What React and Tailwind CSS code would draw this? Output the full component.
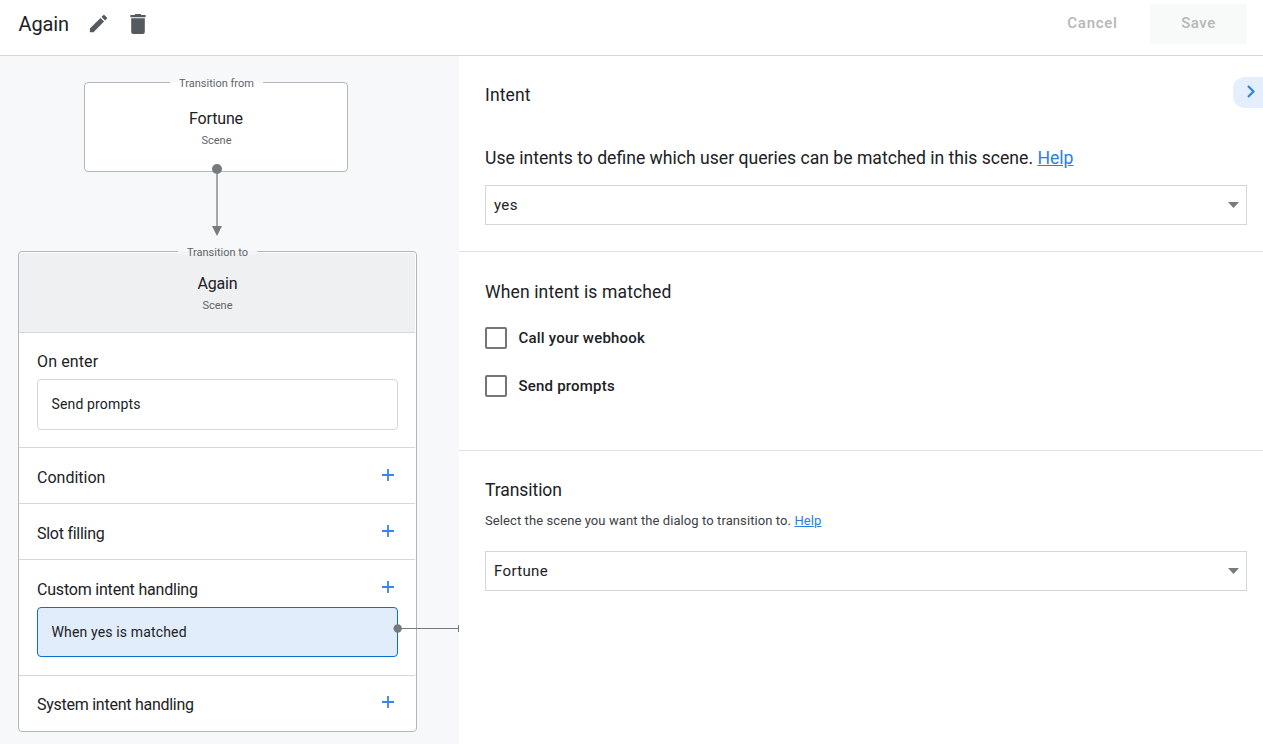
import React from "react";

const display = "font-['Roboto',sans-serif] text-[#202124] whitespace-nowrap";

function Plus() {
  return (
    <svg className="h-3 w-3" viewBox="0 0 12 12" aria-hidden="true">
      <path d="M6 0V12M0 6H12" stroke="#3c82ea" strokeWidth="1.8" fill="none" />
    </svg>
  );
}

function Heading({ children, tracking, add = true }) {
  return (
    <div className="flex h-6 items-center justify-between">
      <span className={`${display} pt-px text-[16px] leading-6 ${tracking}`}>{children}</span>
      {add && (
        <span className="-mt-1 mr-1 flex h-3">
          <Plus />
        </span>
      )}
    </div>
  );
}

function Select({ value }) {
  return (
    <div className="flex h-10 w-[762px] items-center justify-between border border-[#d5d6d9] bg-white pr-[7px] pl-2">
      <span className="text-[15px] leading-6 tracking-[0.35px] text-[#202124]">{value}</span>
      <svg className="h-[6px] w-[11px]" viewBox="0 0 11 6" aria-hidden="true">
        <path d="M0 0H11L5.5 6Z" fill="#757c7f" />
      </svg>
    </div>
  );
}

function Checkbox({ label, tracking }) {
  return (
    <div className="flex h-[22px] items-center gap-[11.5px]">
      <span className="h-[22px] w-[22px] rounded-[2px] border-2 border-[#757575] bg-white" />
      <span className={`text-[15px] leading-[22px] font-medium text-[#202124] ${tracking}`}>{label}</span>
    </div>
  );
}

function Header() {
  return (
    <header className="flex h-14 shrink-0 items-start justify-between border-b border-[#d5d7da] bg-white pr-4 pl-[18px]">
      <div className="flex h-[47px] items-center">
        <h1 className={`${display} w-[51px] pl-[0.5px] text-[20px] leading-6 tracking-[-0.1px]`}>Again</h1>
        <svg className="ml-[17.5px] h-[23px] w-[23px]" viewBox="0 0 24 24" fill="#555a5e" aria-hidden="true">
          <path d="M3 17.25V21h3.75L17.81 9.94l-3.75-3.75L3 17.25zM20.71 7.04a1 1 0 0 0 0-1.41l-2.34-2.34a1 1 0 0 0-1.41 0l-1.83 1.83 3.75 3.75 1.83-1.83z" />
        </svg>
        <svg className="ml-[20px] h-5 w-4" viewBox="0 0 16 20" fill="#555a5e" aria-hidden="true">
          <path d="M5 0h6v1h4.6v2.2H.4V1H5zM1.2 4.2h13.6V18a2 2 0 0 1-2 2H3.2a2 2 0 0 1-2-2z" />
        </svg>
      </div>
      <div className="flex items-center pt-1">
        <button className="h-10 w-[83px] pb-px text-[15px] font-medium tracking-[0.75px] text-[#b5b7b8]">Cancel</button>
        <button className="ml-4 h-10 w-[97px] rounded-[3px] bg-[#f8faf9] pb-px text-[15px] font-medium tracking-[0.5px] text-[#b5b7b8]">
          Save
        </button>
      </div>
    </header>
  );
}

function Diagram() {
  return (
    <aside className="relative flex w-[459px] shrink-0 flex-col bg-[#f7f8fa] pt-[26px] pl-[18px]">
      <section className="relative ml-[66px] flex h-[90px] w-[264px] shrink-0 flex-col items-center rounded-[4px] border border-[#b1b7bc] bg-white pt-[25px]">
        <span className="absolute -top-[1px] left-[85px] flex h-1 w-[93px] items-center justify-center bg-white text-[11px] whitespace-nowrap text-[#5f6368]">
          Transition from
        </span>
        <span className={`${display} pt-px text-[16px] leading-5 tracking-[-0.15px]`}>Fortune</span>
        <span className="mt-1 pl-px text-[11px] leading-4 text-[#5f6368]">Scene</span>
      </section>

      <section className="relative mt-[79px] flex h-[481px] w-[399px] shrink-0 flex-col rounded-[4px] border border-[#b1b7bc] bg-white pt-px pr-px">
        <div className="flex h-20 shrink-0 flex-col items-center rounded-t-[3px] border-b border-[#d5d7da] bg-[#eff0f2] pt-5 pl-px">
          <span className={`${display} pt-px text-[16px] leading-5 tracking-[-0.2px]`}>Again</span>
          <span className="mt-1 text-[11px] leading-4 text-[#5f6368]">Scene</span>
        </div>
        <span className="absolute -top-[1px] left-[159px] flex h-1 w-[79px] items-center justify-center bg-[#f3f4f6] text-[11px] whitespace-nowrap text-[#5f6368]">
          Transition to
        </span>
        <div className="h-[115px] shrink-0 border-b border-[#d5d7da] pt-4 pr-[17px] pl-[18px]">
          <Heading add={false} tracking="tracking-[0.12px]">On enter</Heading>
          <div className="mt-[6px] flex h-[51px] items-center rounded-[4px] border border-[#d5d7da] pl-[13.5px] text-[14px] tracking-[0.15px] text-[#202124]">
            Send prompts
          </div>
        </div>
        <div className="h-14 shrink-0 border-b border-[#d5d7da] pt-[17px] pr-[17px] pl-[18px]">
          <Heading tracking="tracking-normal">Condition</Heading>
        </div>
        <div className="h-14 shrink-0 border-b border-[#d5d7da] pt-[17px] pr-[17px] pl-[18px]">
          <Heading tracking="tracking-[-0.26px]">Slot filling</Heading>
        </div>
        <div className="h-[116px] shrink-0 border-b border-[#d5d7da] pt-[17px] pr-[17px] pl-[18px]">
          <Heading tracking="tracking-[-0.2px]">Custom intent handling</Heading>
          <div className="mt-[6px] flex h-[50px] items-center rounded-[4px] border border-[#0b6fd0] bg-[#e1edfb] pl-[13.5px] text-[14px] tracking-[0.15px] text-[#202124]">
            When yes is matched
          </div>
        </div>
        <div className="pt-4 pr-[17px] pl-[18px]">
          <Heading tracking="tracking-[-0.26px]">System intent handling</Heading>
        </div>
      </section>

      <svg className="absolute top-[108px] left-[211px] h-[74px] w-3" viewBox="0 0 12 74" fill="#737b80" aria-hidden="true">
        <path d="M6 5V64" stroke="#9a9fa2" strokeWidth="1.8" />
        <circle cx="6" cy="5" r="5" />
        <path d="M1 62H11L6 72Z" />
      </svg>
      <svg className="absolute top-[568px] left-[393px] h-[9px] w-[66px]" viewBox="0 0 66 9" fill="#737b7c" aria-hidden="true">
        <circle cx="4.7" cy="4.5" r="4.2" />
        <path d="M4 4H66V5H4zM65 1H66V8H65z" />
      </svg>
    </aside>
  );
}

function Details() {
  return (
    <main className="relative flex min-w-0 flex-1 flex-col bg-white">
      <section className="h-[196px] shrink-0 border-b border-[#dfe0e2] pt-[27px] pl-[26px]">
        <h2 className={`${display} text-[17.5px] leading-6 tracking-[0.15px]`}>Intent</h2>
        <p className="mt-[39px] text-[17.6px] leading-6 whitespace-nowrap text-[#202124]">
          Use intents to define which user queries can be matched in this scene.{" "}
          <a className="text-[#2a7de9] underline" href="#intents">Help</a>
        </p>
        <div className="mt-[15px]">
          <Select value="yes" />
        </div>
      </section>

      <section className="h-[199px] shrink-0 border-b border-[#dfe0e2] pt-7 pl-[26px]">
        <h2 className={`${display} text-[17.5px] leading-6 tracking-[0.15px]`}>When intent is matched</h2>
        <div className="mt-[23px] flex flex-col gap-[26px]">
          <Checkbox label="Call your webhook" tracking="tracking-[0.2px]" />
          <Checkbox label="Send prompts" tracking="tracking-[0.2px]" />
        </div>
      </section>

      <section className="pt-[27px] pl-[26px]">
        <h2 className={`${display} text-[17.5px] leading-6 tracking-[-0.06px]`}>Transition</h2>
        <p className="mt-2 text-[13px] leading-[22px] tracking-[0.09px] whitespace-nowrap text-[#3c4043]">
          Select the scene you want the dialog to transition to.{" "}
          <a className="text-[#2a7de9] underline" href="#transition">Help</a>
        </p>
        <div className="mt-[19px]">
          <Select value="Fortune" />
        </div>
      </section>

      <button className="absolute top-[21px] right-0 flex h-[31px] w-[30px] items-center rounded-l-[12px] bg-[#e4eefd] pb-px pl-[13px]" aria-label="Collapse">
        <svg className="h-[14px] w-[10px]" viewBox="0 0 10 14" aria-hidden="true">
          <path d="M2 1L7.5 6.5L2 12" fill="none" stroke="#2680f0" strokeWidth="2.1" />
        </svg>
      </button>
    </main>
  );
}

export default function App() {
  return (
    <div className="flex h-[744px] w-[1263px] flex-col overflow-hidden bg-white font-['Roboto',sans-serif]">
      <Header />
      <div className="flex min-h-0 flex-1">
        <Diagram />
        <Details />
      </div>
    </div>
  );
}
